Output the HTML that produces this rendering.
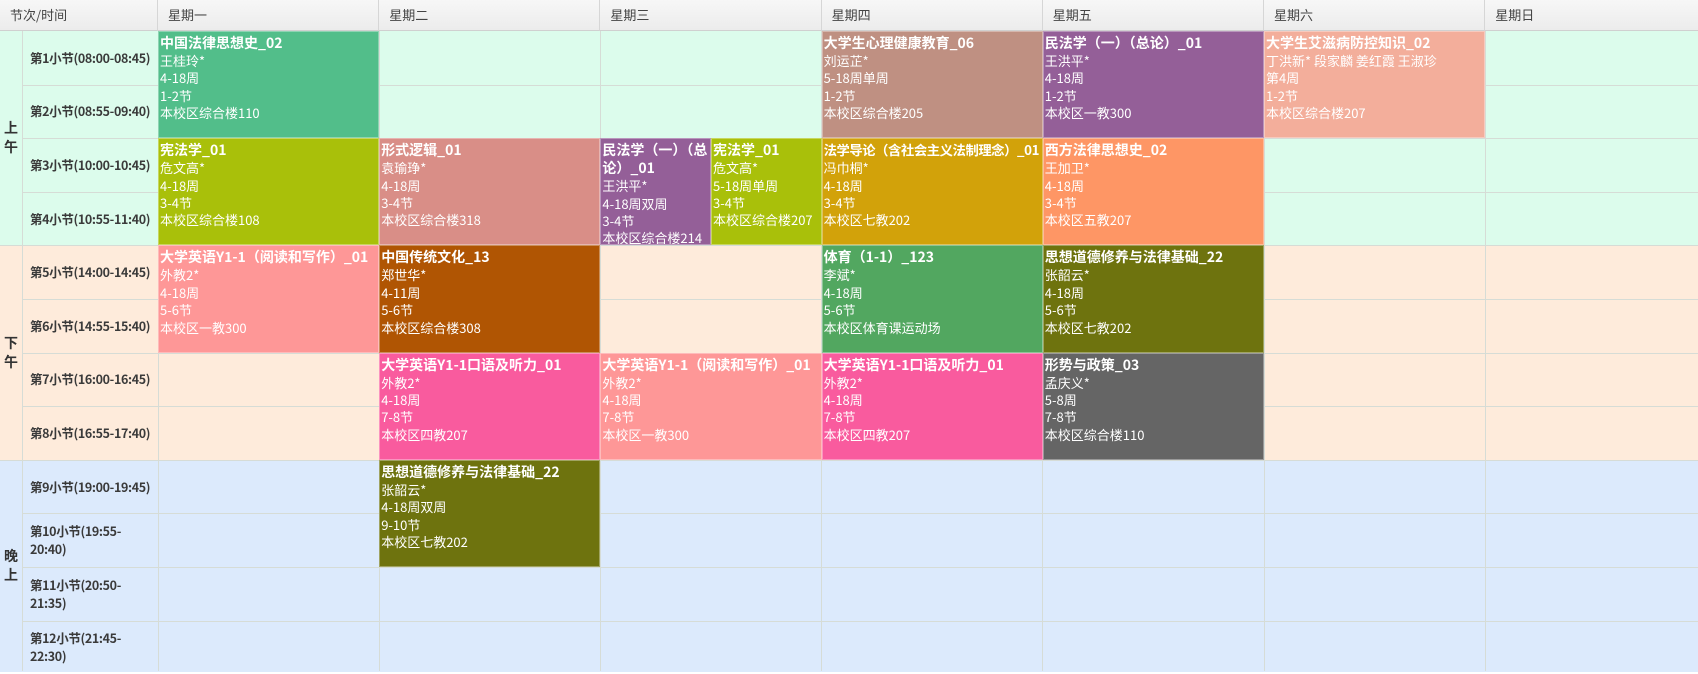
<!DOCTYPE html>
<html><head><meta charset="utf-8"><style>
*{margin:0;padding:0;box-sizing:border-box}
body{width:1698px;height:671px;overflow:hidden;background:#fff;font-family:"Noto Sans CJK SC","Liberation Sans",sans-serif;position:relative}
.a{position:absolute}
.h{top:0;height:31px;background:linear-gradient(#f7f7f7,#ececec);border-right:1px solid #d6d6d6;border-bottom:1px solid #d0d0d0;font-size:13px;color:#444;line-height:30px;padding-left:10px}
.bg{left:0;width:1698px}
.hl{left:0;width:1698px;height:1px;background:#d6dcd6}
.vl{top:31px;width:1px;height:640px;background:#d6dcd6}
.t{left:22px;width:136px;font-size:12.5px;letter-spacing:-0.35px;font-weight:bold;color:#3a3a3a;padding-left:8px;display:flex;align-items:center;line-height:18px;white-space:nowrap}
.s{left:0;width:22px;font-size:14px;font-weight:bold;color:#333;display:flex;align-items:center;justify-content:center;text-align:center;line-height:19px}
.c{color:#fff;font-size:13px;line-height:17.4px;padding:2px 1px 0 1px;border:1px solid rgba(255,255,255,.35);overflow:hidden}
.c b{font-size:14px;display:block;line-height:18px}
</style></head><body>
<div class="a bg" style="top:31px;height:214.4px;background:#dcfcec"></div>
<div class="a bg" style="top:245.4px;height:214.4px;background:#feebdb"></div>
<div class="a bg" style="top:459.8px;height:212px;background:#dceafc"></div>

<div class="a h" style="left:0;width:158px">节次/时间</div>
<div class="a h" style="left:158px;width:221.2px">星期一</div>
<div class="a h" style="left:379.2px;width:221.2px">星期二</div>
<div class="a h" style="left:600.4px;width:221.2px">星期三</div>
<div class="a h" style="left:821.6px;width:221.2px">星期四</div>
<div class="a h" style="left:1042.8px;width:221.2px">星期五</div>
<div class="a h" style="left:1264px;width:221.2px">星期六</div>
<div class="a h" style="left:1485.2px;width:213px;border-right:none">星期日</div>

<div class="a hl" style="top:84.6px;left:22px"></div>
<div class="a hl" style="top:138.2px;left:22px"></div>
<div class="a hl" style="top:191.8px;left:22px"></div>
<div class="a hl" style="top:245.4px"></div>
<div class="a hl" style="top:299px;left:22px"></div>
<div class="a hl" style="top:352.6px;left:22px"></div>
<div class="a hl" style="top:406.2px;left:22px"></div>
<div class="a hl" style="top:459.8px"></div>
<div class="a hl" style="top:513.4px;left:22px"></div>
<div class="a hl" style="top:567px;left:22px"></div>
<div class="a hl" style="top:620.6px;left:22px"></div>
<div class="a vl" style="left:22px"></div>
<div class="a vl" style="left:158px"></div>
<div class="a vl" style="left:379px"></div>
<div class="a vl" style="left:600px"></div>
<div class="a vl" style="left:821px"></div>
<div class="a vl" style="left:1042px"></div>
<div class="a vl" style="left:1264px"></div>
<div class="a vl" style="left:1485px"></div>

<div class="a s" style="top:31px;height:214.4px">上<br>午</div>
<div class="a s" style="top:245.4px;height:214.4px">下<br>午</div>
<div class="a s" style="top:459.8px;height:212px">晚<br>上</div>

<div class="a t" style="top:31px;height:53.6px">第1小节(08:00-08:45)</div>
<div class="a t" style="top:84.6px;height:53.6px">第2小节(08:55-09:40)</div>
<div class="a t" style="top:138.2px;height:53.6px">第3小节(10:00-10:45)</div>
<div class="a t" style="top:191.8px;height:53.6px">第4小节(10:55-11:40)</div>
<div class="a t" style="top:245.4px;height:53.6px">第5小节(14:00-14:45)</div>
<div class="a t" style="top:299px;height:53.6px">第6小节(14:55-15:40)</div>
<div class="a t" style="top:352.6px;height:53.6px">第7小节(16:00-16:45)</div>
<div class="a t" style="top:406.2px;height:53.6px">第8小节(16:55-17:40)</div>
<div class="a t" style="top:459.8px;height:53.6px">第9小节(19:00-19:45)</div>
<div class="a t" style="top:513.4px;height:53.6px">第10小节(19:55-<br>20:40)</div>
<div class="a t" style="top:567px;height:53.6px">第11小节(20:50-<br>21:35)</div>
<div class="a t" style="top:620.6px;height:53.6px">第12小节(21:45-<br>22:30)</div>

<div class="a c" style="left:158px;top:31px;width:221.2px;height:107.2px;background:#52be8a"><b>中国法律思想史_02</b>王桂玲*<br>4-18周<br>1-2节<br>本校区综合楼110</div>
<div class="a c" style="left:158px;top:138.2px;width:221.2px;height:107.2px;background:#a9c00a"><b>宪法学_01</b>危文高*<br>4-18周<br>3-4节<br>本校区综合楼108</div>
<div class="a c" style="left:158px;top:245.4px;width:221.2px;height:107.2px;background:#fe9797"><b>大学英语Y1-1（阅读和写作）_01</b>外教2*<br>4-18周<br>5-6节<br>本校区一教300</div>
<div class="a c" style="left:379.2px;top:138.2px;width:221.2px;height:107.2px;background:#d98e87"><b>形式逻辑_01</b>袁瑜琤*<br>4-18周<br>3-4节<br>本校区综合楼318</div>
<div class="a c" style="left:379.2px;top:245.4px;width:221.2px;height:107.2px;background:#b05503"><b>中国传统文化_13</b>郑世华*<br>4-11周<br>5-6节<br>本校区综合楼308</div>
<div class="a c" style="left:379.2px;top:352.6px;width:221.2px;height:107.2px;background:#f95b9e"><b>大学英语Y1-1口语及听力_01</b>外教2*<br>4-18周<br>7-8节<br>本校区四教207</div>
<div class="a c" style="left:379.2px;top:459.8px;width:221.2px;height:107.2px;background:#6e730e"><b>思想道德修养与法律基础_22</b>张韶云*<br>4-18周双周<br>9-10节<br>本校区七教202</div>
<div class="a c" style="left:600.4px;top:138.2px;width:110.6px;height:107.2px;background:#945f98"><b>民法学（一）（总论）_01</b>王洪平*<br>4-18周双周<br>3-4节<br>本校区综合楼214</div>
<div class="a c" style="left:711px;top:138.2px;width:110.6px;height:107.2px;background:#a9c00a"><b>宪法学_01</b>危文高*<br>5-18周单周<br>3-4节<br>本校区综合楼207</div>
<div class="a c" style="left:600.4px;top:352.6px;width:221.2px;height:107.2px;background:#fe9797"><b>大学英语Y1-1（阅读和写作）_01</b>外教2*<br>4-18周<br>7-8节<br>本校区一教300</div>
<div class="a c" style="left:821.6px;top:31px;width:221.2px;height:107.2px;background:#bf9082"><b>大学生心理健康教育_06</b>刘运芷*<br>5-18周单周<br>1-2节<br>本校区综合楼205</div>
<div class="a c" style="left:821.6px;top:138.2px;width:221.2px;height:107.2px;background:#d2a20a"><b style="white-space:nowrap;font-size:13.3px;letter-spacing:-0.4px">法学导论（含社会主义法制理念）_01</b>冯巾桐*<br>4-18周<br>3-4节<br>本校区七教202</div>
<div class="a c" style="left:821.6px;top:245.4px;width:221.2px;height:107.2px;background:#52a760"><b>体育（1-1）_123</b>李斌*<br>4-18周<br>5-6节<br>本校区体育课运动场</div>
<div class="a c" style="left:821.6px;top:352.6px;width:221.2px;height:107.2px;background:#f95b9e"><b>大学英语Y1-1口语及听力_01</b>外教2*<br>4-18周<br>7-8节<br>本校区四教207</div>
<div class="a c" style="left:1042.8px;top:31px;width:221.2px;height:107.2px;background:#945f98"><b>民法学（一）（总论）_01</b>王洪平*<br>4-18周<br>1-2节<br>本校区一教300</div>
<div class="a c" style="left:1042.8px;top:138.2px;width:221.2px;height:107.2px;background:#fe9665"><b>西方法律思想史_02</b>王加卫*<br>4-18周<br>3-4节<br>本校区五教207</div>
<div class="a c" style="left:1042.8px;top:245.4px;width:221.2px;height:107.2px;background:#6e730e"><b>思想道德修养与法律基础_22</b>张韶云*<br>4-18周<br>5-6节<br>本校区七教202</div>
<div class="a c" style="left:1042.8px;top:352.6px;width:221.2px;height:107.2px;background:#656565"><b>形势与政策_03</b>孟庆义*<br>5-8周<br>7-8节<br>本校区综合楼110</div>
<div class="a c" style="left:1264px;top:31px;width:221.2px;height:107.2px;background:#f3ae9b"><b>大学生艾滋病防控知识_02</b>丁洪新* 段家麟 姜红霞 王淑珍<br>第4周<br>1-2节<br>本校区综合楼207</div>
</body></html>
